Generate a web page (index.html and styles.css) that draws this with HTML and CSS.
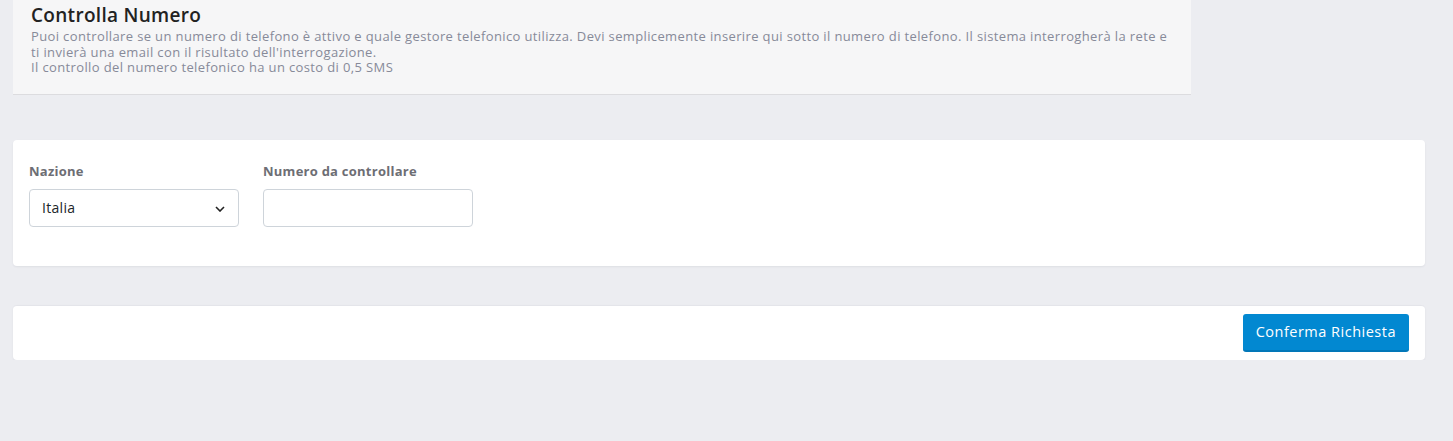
FILE: index.html
```html
<!DOCTYPE html>
<html lang="it">
<head>
    <meta charset="utf-8">
    <meta name="viewport" content="width=device-width, initial-scale=1.0">
    <title>Controlla Numero</title>
    <link rel="stylesheet" href="styles.css">
</head>
<body>

<div class="page">
    <div class="page-header">
        <h1 class="page-title">Controlla Numero</h1>
        <p class="page-desc">
            Puoi controllare se un numero di telefono è attivo e quale gestore telefonico utilizza. Devi semplicemente inserire qui sotto il numero di telefono. Il sistema interrogherà la rete e<br>
            ti invierà una email con il risultato dell'interrogazione.<br>
            Il controllo del numero telefonico ha un costo di 0,5 SMS
        </p>
    </div>

    <div class="card">
        <div class="form-row">
            <div class="form-group">
                <label for="nazione">Nazione</label>
                <div class="select-wrap">
                    <select id="nazione">
                        <option>Italia</option>
                    </select>
                    <svg class="chevron" width="10" height="6" viewBox="0 0 10 6"><path d="M1 1l4 4 4-4" fill="none" stroke="#222" stroke-width="1.6"/></svg>
                </div>
            </div>
            <div class="form-group">
                <label for="numero">Numero da controllare</label>
                <input type="text" id="numero">
            </div>
        </div>
    </div>

    <div class="card card-footer">
        <button class="btn-primary">Conferma Richiesta</button>
    </div>
</div>

</body>
</html>
```

FILE: styles.css
```css
body {
    font-family: "Open Sans", Arial, sans-serif;
    margin: 0;
    padding: 0;
    background: #ecedf1;
}
.page {
    padding: 0 28px 0 13px;
}
.page-header {
    width: 1178px;
    height: 95px;
    box-sizing: border-box;
    padding: 3px 18px 0 18px;
    background: #f6f6f7;
    border-bottom: 1px solid #dcdcdf;
}
.page-title {
    margin: 0;
    font-size: 19px;
    font-weight: 600;
    letter-spacing: 0.3px;
    color: #222;
    line-height: 24px;
}
.page-desc {
    margin: 2px 0 0 0;
    font-size: 13px;
    letter-spacing: 0.37px;
    line-height: 15.5px;
    color: #878a99;
    white-space: nowrap;
}
.card {
    background: #fff;
    border-radius: 4px;
    box-shadow: 0 1px 2px rgba(56, 65, 74, 0.08);
}
.page-header + .card {
    margin-top: 45px;
    padding: 23px 16px 39px 16px;
}
.form-row {
    display: flex;
    gap: 24px;
}
.form-group {
    width: 210px;
}
.form-group label {
    display: block;
    font-size: 13px;
    font-weight: 700;
    letter-spacing: 0.25px;
    color: #6d6e74;
    margin-bottom: 8.5px;
    line-height: 17px;
}
.select-wrap {
    position: relative;
}
.form-group select,
.form-group input {
    display: block;
    width: 100%;
    height: 38px;
    box-sizing: border-box;
    border: 1px solid #ced4da;
    border-radius: 4px;
    background: #fff;
    font-family: inherit;
    font-size: 14px;
    letter-spacing: 0.3px;
    color: #212529;
    padding: 0 12px;
    outline: none;
}
.form-group select {
    -webkit-appearance: none;
    appearance: none;
}
.chevron {
    position: absolute;
    right: 14px;
    top: 17px;
    pointer-events: none;
}
.card-footer {
    margin-top: 39px;
    border-top: 1px solid #e4e5ea;
    padding: 8px 16px 8px 16px;
    display: flex;
    justify-content: flex-end;
}
.btn-primary {
    height: 38px;
    padding: 0 13px;
    background: #0288d1;
    color: #fff;
    border: none;
    border-bottom: 2px solid #0277b8;
    border-radius: 3px;
    font-family: inherit;
    font-size: 14.5px;
    letter-spacing: 0.5px;
    cursor: pointer;
}
```
